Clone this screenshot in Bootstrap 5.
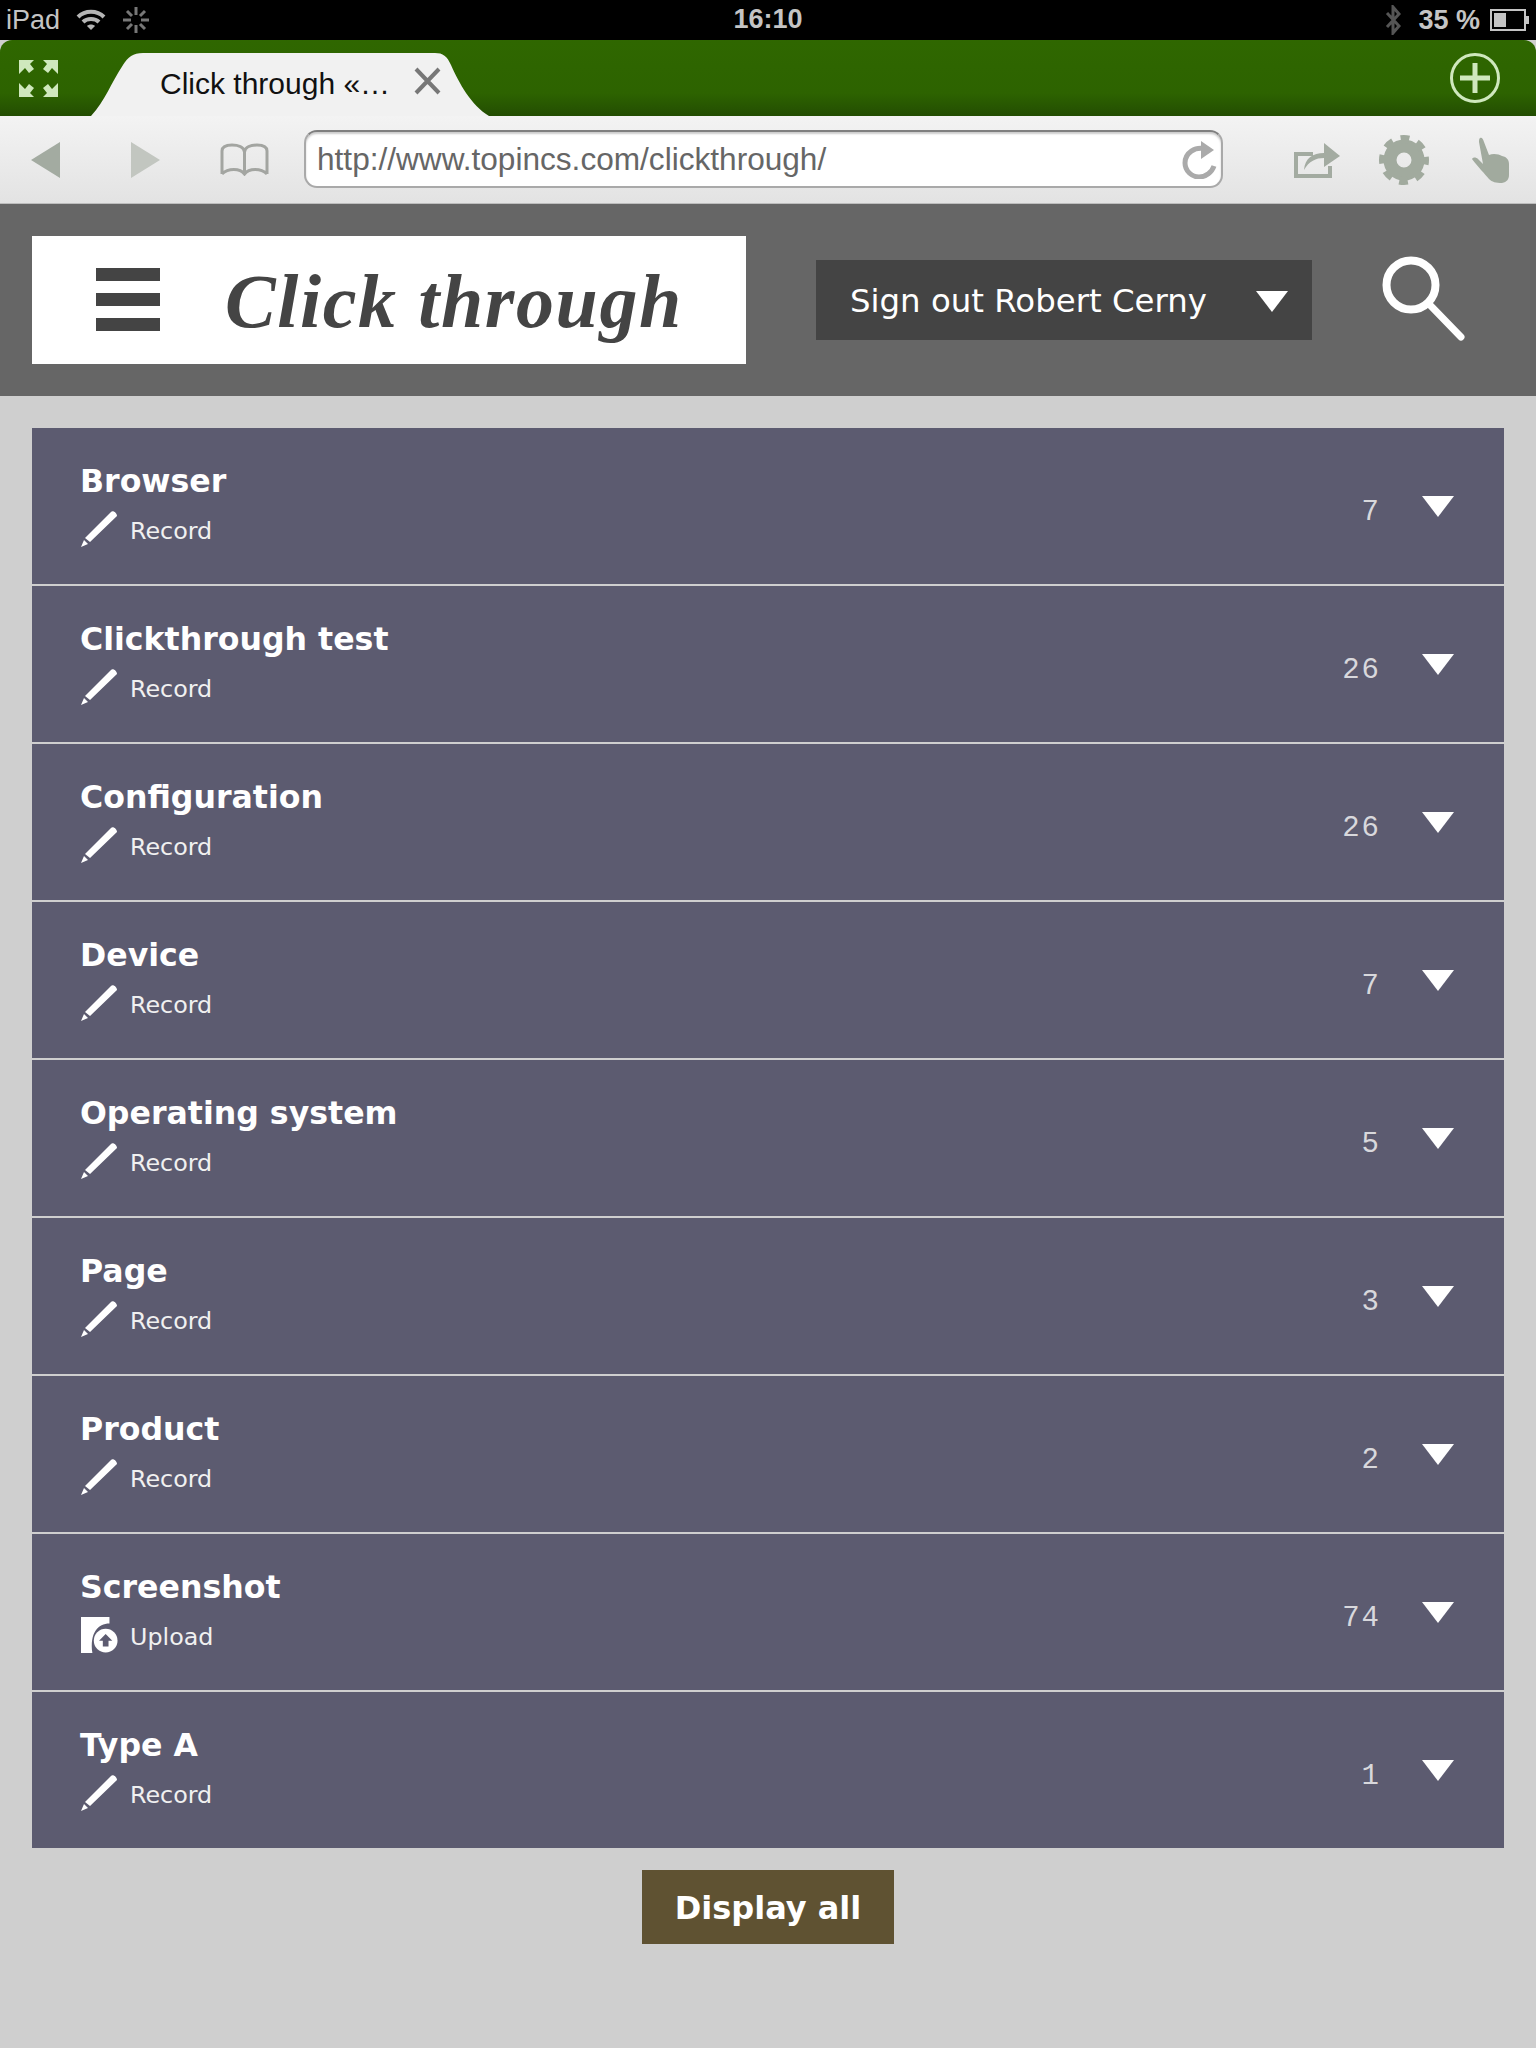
<!DOCTYPE html>
<html lang="en">

<head>
    <meta charset="UTF-8">
    <title>Click through</title>
    <link href="https://cdn.jsdelivr.net/npm/bootstrap@5.3.0/dist/css/bootstrap.min.css" rel="stylesheet" />
    <script src="https://cdn.jsdelivr.net/npm/bootstrap@5.3.0/dist/js/bootstrap.bundle.min.js"></script>
    <style>
        body { background: #cfcfcf; font-family: "DejaVu Sans", sans-serif; min-height: 2048px; }
        svg { display: block; flex: none; }

        /* iPad status bar */
        .status-bar { height: 40px; background: #000; color: #c4c4c4; font: 27px/38px "Liberation Sans", sans-serif; padding: 0 6px; position: relative; }
        .status-clock { width: 100%; text-align: center; position: absolute; left: 0; top: 0; font-weight: 700; }
        .status-pct { font-weight: 700; margin-left: 17px; margin-right: 10px; }

        /* browser tabs */
        .tab-bar { height: 76px; background: linear-gradient(#2f6700 0, #2d6300 70%, #234d02 100%); border-radius: 12px 12px 0 0; padding: 13px 36px 0 19px; }
        .tab-shape { width: 398px; height: 63px; margin-left: 33px; background: #f1f1f1; padding: 12px 0 0 69px; color: #111; font: 30px/38px "Liberation Sans", sans-serif;
            clip-path: path("M0 63C14 48 20 30 32 12C37 4 42 0 52 0L344 0C352 0 356 3 360 12C368 30 380 52 398 63Z"); }
        .tab-title { width: 254px; white-space: nowrap; }
        .tab-close { margin-top: 2px; }

        /* browser toolbar */
        .tool-bar { height: 88px; background: linear-gradient(#f3f3f3, #e3e3e3); border-bottom: 1px solid #bdbdbd; padding: 0 26px 0 31px; }
        .tool-fwd { margin-left: 71px; }
        .tool-book { margin-left: 60px; }
        .tool-gear { margin-left: 38px; }
        .tool-hand { margin-left: 43px; }
        .url-box { width: 921px; height: 58px; margin: -2px 70px 0 35px; background: #fff; border: 2px solid #a9a9a9; border-top-color: #7f7f7f; border-radius: 13px; color: #666; font: 31.6px/54px "Liberation Sans", sans-serif; padding: 0 4px 0 11px; box-shadow: inset 0 2px 2px #ccc; }
        .url-reload { margin-top: 2px; }

        /* site header */
        .site-header { height: 192px; background: #666; padding: 32px; }
        .logo-box { width: 714px; height: 128px; background: #fff; padding: 32px 0 0 64px; }
        .burger { width: 64px; height: 63px; }
        .burger i { display: block; height: 13px; background: #444; }
        .logo-text { margin: -15px 0 0 65px; font: italic 700 76px/96px "Liberation Serif", serif; letter-spacing: 1.6px; color: #444; white-space: nowrap; }
        .signout-box { width: 496px; height: 80px; margin-left: 70px; margin-top: 24px; background: #444; color: #fff; font-size: 32.4px; padding: 2px 24px 0 34px; }
        .search-icon { margin: 20px 0 0 70px; }

        /* record list */
        .type-list { padding: 32px 32px 0; }
        .type-row.list-group-item { height: 158px; padding: 34px 50px 0 48px; background: #5c5b70; color: #fff; border: 0; border-bottom: 2px solid #cfcfcf; border-radius: 0; }
        .type-row.list-group-item:last-child { height: 156px; border-bottom: 0; }
        .type-name { font-weight: 700; font-size: 31.6px; line-height: 38px; }
        .type-action { font-size: 23.8px; line-height: 36px; margin-top: 13px; gap: 12px; color: #f0f0f0; }
        .type-action svg { margin: -5px 0 0 1px; }
        .type-count { font: 29px/36px "Liberation Mono", monospace; letter-spacing: 2px; color: #d8d8dc; margin-top: 33px; margin-right: 41px; }
        .arrow-down { width: 0; height: 0; border-left: 16px solid transparent; border-right: 16px solid transparent; border-top: 21px solid #fff; }
        .type-row .arrow-down { margin-top: 34px; }
        .display-btn.btn { width: 252px; height: 74px; margin-top: 22px; background: #5f5232; color: #fff; border: 0; border-radius: 0; font-weight: 700; font-size: 32px; line-height: 76px; padding: 0; }
    </style>
</head>

<body>

    <div class="status-bar d-flex align-items-center">
        <span>iPad</span>
        <svg class="ms-3" width="30" height="22" viewBox="0 0 30 22" fill="none" stroke="#b5b5b5" stroke-width="4"><path d="M2 8C9 1 21 1 28 8M7 13C11 9 19 9 23 13"/><path d="M11 17L15 21L19 17C17 15 13 15 11 17Z" fill="#b5b5b5" stroke="none"/></svg>
        <svg class="ms-3" width="28" height="28" viewBox="0 0 28 28" stroke="#777" stroke-width="3"><path d="M14 1V9M14 19V27M1 14H9M19 14H27M5 5L10 10M18 18L23 23M5 23L10 18M18 10L23 5"/></svg>
        <span class="status-clock">16:10</span>
        <svg class="ms-auto" width="16" height="30" viewBox="0 0 16 30" fill="none" stroke="#555" stroke-width="3"><path d="M2 8L14 21L8 28V2L14 9L2 22"/></svg>
        <span class="status-pct">35 %</span>
        <svg width="40" height="22" viewBox="0 0 40 22"><rect x="1" y="1" width="34" height="20" fill="none" stroke="#c4c4c4" stroke-width="2"/><rect x="4" y="4" width="12" height="14" fill="#c4c4c4"/><rect x="36" y="7" width="3" height="8" fill="#c4c4c4"/></svg>
    </div>

    <div class="tab-bar d-flex">
        <svg class="mt-1" width="39" height="40" viewBox="0 0 39 40" fill="#cfe8bd"><path d="M0 3H15L11 7L15 12L10 16L6 11L0 17ZM39 3H24L28 7L24 12L29 16L33 11L39 17ZM0 40H15L11 36L15 31L10 27L6 32L0 26ZM39 40H24L28 36L24 31L29 27L33 32L39 26Z"/></svg>
        <div class="tab-shape d-flex">
            <span class="tab-title">Click through «…</span>
            <svg class="tab-close" width="27" height="28" viewBox="0 0 27 28" stroke="#777" stroke-width="4"><path d="M2 2L25 26M25 2L2 26"/></svg>
        </div>
        <svg class="ms-auto" width="50" height="50" viewBox="0 0 50 50" fill="none" stroke="#cfe8bd"><circle cx="25" cy="25" r="23.5" stroke-width="3"/><path d="M25 10V40M10 25H40" stroke-width="5"/></svg>
    </div>

    <div class="tool-bar d-flex align-items-center">
        <svg width="29" height="36" viewBox="0 0 29 36" fill="#a3aba1"><path d="M0 18L29 0V36Z"/></svg>
        <svg class="tool-fwd" width="29" height="36" viewBox="0 0 29 36" fill="#c2c6c0"><path d="M29 18L0 0V36Z"/></svg>
        <svg class="tool-book" width="49" height="33" viewBox="0 0 49 33" fill="none" stroke="#a3a5a1" stroke-width="3"><path d="M2 31V8C2 3 6 2 12 2C18 2 24 4 24.5 9C25 4 31 2 37 2C43 2 47 3 47 8V31M2 31C8 25 20 25 24.5 31C29 25 41 25 47 31M24.5 9V31"/></svg>
        <div class="url-box d-flex align-items-center justify-content-between">
            <span>http://www.topincs.com/clickthrough/</span>
            <svg class="url-reload" width="36" height="38" viewBox="0 0 36 38" fill="none" stroke="#aaa" stroke-width="5"><path d="M25 8C14 5 4 12 4 22C4 30 11 36 18 36C25 36 31 31 33 25"/><path d="M20 0L33 9L20 18Z" fill="#aaa" stroke="none"/></svg>
        </div>
        <svg width="48" height="36" viewBox="0 0 48 36" fill="none" stroke="#a3aba1" stroke-width="4"><path d="M20 12H3V34H37V24"/><path d="M11 28C12 16 20 11 31 11V1L47 14L31 25V16C23 16 16 19 11 28Z" fill="#a3aba1" stroke="none"/></svg>
        <svg class="tool-gear" width="50" height="50" viewBox="0 0 50 50" fill="none" stroke="#a1aa9e"><circle cx="25" cy="25" r="14" stroke-width="13"/><circle cx="25" cy="25" r="21" stroke-width="8" stroke-dasharray="8.5 8" stroke-dashoffset="4"/></svg>
        <svg class="tool-hand" width="38" height="46" viewBox="0 0 38 46" fill="#a1aa9e"><path d="M8 1C10 0 11 2 12 5L17 18C21 16 27 17 30 19C35 20 37 23 37 27V38C37 42 35 45 30 46C24 46 20 45 17 42C13 37 6 30 0 22C1 20 4 20 6 22L11 27L7 5C7 3 7 2 8 1Z"/></svg>
    </div>

    <header class="site-header d-flex align-items-start">
        <div class="logo-box d-flex">
            <div class="burger d-flex flex-column justify-content-between"><i></i><i></i><i></i></div>
            <div class="logo-text">Click through</div>
        </div>
        <div class="signout-box d-flex align-items-center justify-content-between">
            <span>Sign out Robert Cerny</span>
            <span class="arrow-down"></span>
        </div>
        <svg class="search-icon" width="84" height="86" viewBox="0 0 84 86" fill="none" stroke="#fff" stroke-linecap="round"><circle cx="29" cy="29" r="24.5" stroke-width="8"/><path d="M47 48L79 81" stroke-width="7"/></svg>
    </header>

    <main class="type-list">
        <div id="listaTipos" class="list-group rounded-0"></div>
        <div class="text-center">
            <a class="display-btn btn">Display all</a>
        </div>
    </main>

    <script>
        const tipos = [
            ['Browser', 7, 'Record'],
            ['Clickthrough test', 26, 'Record'],
            ['Configuration', 26, 'Record'],
            ['Device', 7, 'Record'],
            ['Operating system', 5, 'Record'],
            ['Page', 3, 'Record'],
            ['Product', 2, 'Record'],
            ['Screenshot', 74, 'Upload'],
            ['Type A', 1, 'Record']
        ];

        const lapiz = '<svg width="37" height="36" viewBox="0 0 37 36" fill="#fff"><path d="M30 1C32 -1 36 2 36 5L9 31L4 27ZM3 29L7 33L0 36Z"/></svg>';
        const subir = '<svg width="37" height="38" viewBox="0 0 39 38"><path d="M0 0H30V7C18 7 9 17 12 38H0Z" fill="#fff"/><circle cx="26" cy="25" r="12.5" fill="#fff"/><path d="M26 18L33 25H29V31H23V25H19Z" fill="#5c5b70"/></svg>';

        document.getElementById('listaTipos').innerHTML = tipos.map(t => `
          <div class="type-row list-group-item d-flex">
            <div class="flex-grow-1">
              <div class="type-name">${t[0]}</div>
              <div class="type-action d-flex align-items-center">${t[2] === 'Upload' ? subir : lapiz}<span>${t[2]}</span></div>
            </div>
            <div class="type-count">${t[1]}</div>
            <span class="arrow-down"></span>
          </div>`).join('');
    </script>

</body>

</html>
